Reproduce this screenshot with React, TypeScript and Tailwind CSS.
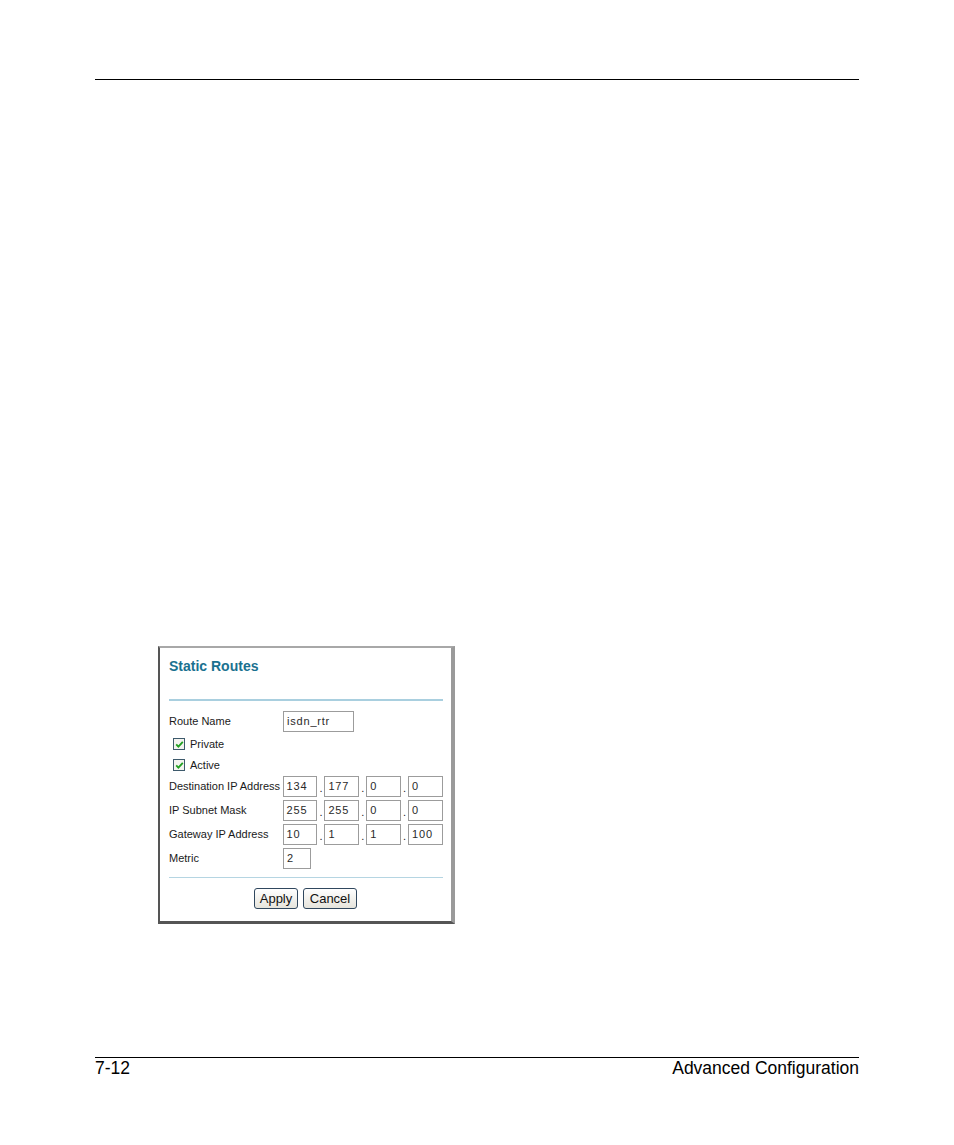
import React from "react";

const font = { fontFamily: '"Liberation Sans", Arial, sans-serif' };

function Box({ w, value }: { w: string; value: string }) {
  return (
    <div
      className={`${w} h-[21px] border border-[#9c9c9c] bg-white flex items-center pl-[3px] text-[11px] tracking-[0.8px] text-[#2a2a2a]`}
    >
      {value}
    </div>
  );
}

function Dot() {
  return (
    <div className="w-[7px] h-[21px] flex items-end justify-center pb-[3px] text-[11px] leading-none text-[#222]">
      .
    </div>
  );
}

function IpRow({ label, vals, mt }: { label: string; vals: string[]; mt: string }) {
  return (
    <div className={`flex items-center h-[21px] ${mt}`}>
      <div className="w-[114px] text-[11px] text-[#1a1a1a] whitespace-nowrap">{label}</div>
      <Box w="w-[35px]" value={vals[0]} />
      <Dot />
      <Box w="w-[35px]" value={vals[1]} />
      <Dot />
      <Box w="w-[35px]" value={vals[2]} />
      <Dot />
      <Box w="w-[35px]" value={vals[3]} />
    </div>
  );
}

function Check() {
  return (
    <span className="w-[12px] h-[12px] border border-[#3d5a6c] bg-[#f4f4f0] flex items-center justify-center">
      <svg width="9" height="9" viewBox="0 0 9 9">
        <path d="M1.2 4.3 L3.4 6.6 L7.8 1.8" fill="none" stroke="#22a022" strokeWidth="1.8" />
      </svg>
    </span>
  );
}

function Btn({ w, label }: { w: string; label: string }) {
  return (
    <div
      className={`${w} h-[21px] rounded-[3px] border border-[#30475e] bg-gradient-to-b from-white to-[#e6e4dc] flex items-center justify-center text-[13px] text-[#111]`}
    >
      {label}
    </div>
  );
}

export default function App() {
  return (
    <div className="w-[954px] h-[1145px] bg-white flex flex-col" style={font}>
      <div className="h-[79px]" />
      <div className="ml-[95px] w-[764px] h-px bg-black" />

      <div className="mt-[566px] ml-[158px] w-[297px] h-[278px] border-l-2 border-t-2 border-r-4 border-b-[3px] border-l-[#555] border-t-[#a8a8a8] border-r-[#9a9a9a] border-b-[#555] bg-white flex flex-col pl-[9px] pr-[8px]">
        <div className="mt-[10px] h-[16px] leading-[16px] text-[14px] font-bold text-[#1a7190]">
          Static Routes
        </div>
        <div className="mt-[25px] h-[2px] bg-[#a9cfdf]" />

        <div className="mt-[10px] flex items-center h-[21px]">
          <div className="w-[114px] text-[11px] text-[#1a1a1a]">Route Name</div>
          <Box w="w-[71px]" value="isdn_rtr" />
        </div>

        <div className="h-[24px] flex items-start pl-[4px]">
          <div className="mt-[5px] h-[14px] flex items-center gap-[5px] leading-[14px]">
            <Check />
            <span className="text-[11px] text-[#1a1a1a]">Private</span>
          </div>
        </div>
        <div className="h-[20px] flex items-start pl-[4px]">
          <div className="mt-[2px] h-[14px] flex items-center gap-[5px] leading-[14px]">
            <Check />
            <span className="text-[11px] text-[#1a1a1a]">Active</span>
          </div>
        </div>

        <IpRow label="Destination IP Address" vals={["134", "177", "0", "0"]} mt="mt-0" />
        <IpRow label="IP Subnet Mask" vals={["255", "255", "0", "0"]} mt="mt-[3px]" />
        <IpRow label="Gateway IP Address" vals={["10", "1", "1", "100"]} mt="mt-[3px]" />

        <div className="mt-[3px] flex items-center h-[21px]">
          <div className="w-[114px] text-[11px] text-[#1a1a1a]">Metric</div>
          <Box w="w-[28px]" value="2" />
        </div>

        <div className="mt-[8px] h-px bg-[#b5d5e2]" />

        <div className="mt-[10px] flex justify-center gap-[5px] pr-[1px]">
          <Btn w="w-[44px]" label="Apply" />
          <Btn w="w-[54px]" label="Cancel" />
        </div>
      </div>

      <div className="mt-[133px] ml-[95px] w-[764px] h-px bg-black" />
      <div className="ml-[95px] w-[764px] flex justify-between text-[17.5px] leading-[20px] text-black">
        <span>7-12</span>
        <span>Advanced Configuration</span>
      </div>
    </div>
  );
}
